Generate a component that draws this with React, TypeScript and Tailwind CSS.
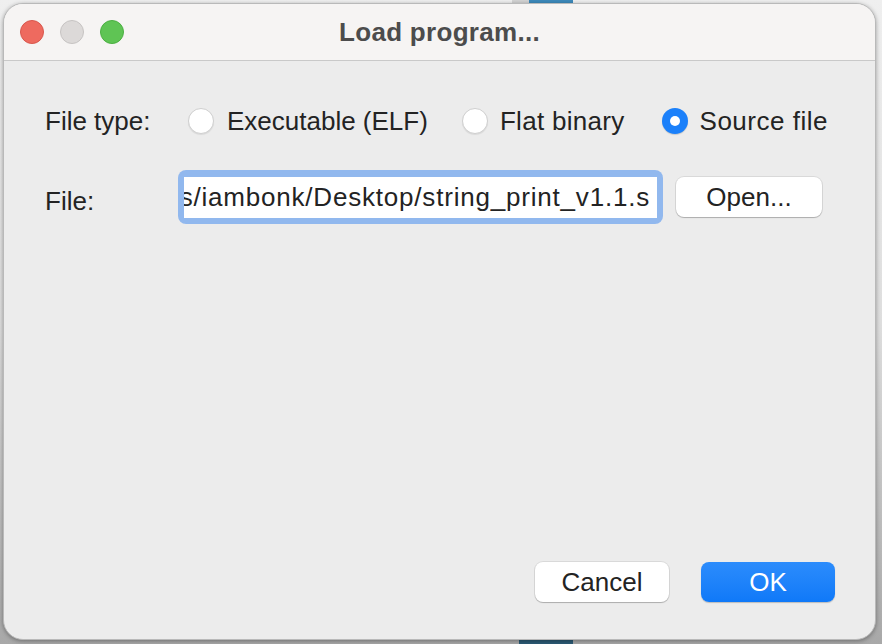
import React from "react";

function Radio({ checked }: { checked?: boolean }) {
  if (checked) {
    return (
      <div className="w-[26px] h-[26px] rounded-full bg-[#1b80fa] flex items-center justify-center shadow-[0_1px_1px_rgba(0,0,0,0.15)] shrink-0">
        <div className="w-[10px] h-[10px] rounded-full bg-white" />
      </div>
    );
  }
  return (
    <div className="w-[26px] h-[26px] rounded-full bg-white border border-[#cfcfcf] shadow-[0_1px_1px_rgba(0,0,0,0.08)] shrink-0" />
  );
}

export default function App() {
  return (
    <div className="relative w-[882px] h-[644px] overflow-hidden bg-linear-to-b from-[#efefef] via-[#dedede] to-[#a8a8a8] pl-[3px] pt-[3px] font-['Liberation_Sans',Arial,sans-serif]">
      <div className="absolute left-[512px] top-0 w-[17px] h-[3px] bg-[#d3d3d3]" />
      <div className="absolute left-[529px] top-0 w-[44px] h-[3px] bg-[#3d89ba]" />
      <div className="absolute left-[519px] bottom-0 w-[54px] h-[4px] bg-[#2b5a74]" />
      <div className="relative w-[873px] h-[637px] rounded-[20px] border border-[#b9b9b9] bg-[#ececec] shadow-[0_1px_4px_rgba(0,0,0,0.35)] overflow-hidden flex flex-col">
        <div className="relative h-[57px] shrink-0 bg-[#f6f4f3] border-b border-[#c9c9c9] flex items-center justify-center">
          <div className="absolute left-[16px] top-[16px] flex gap-[16px]">
            <div className="w-[24px] h-[24px] rounded-full bg-[#ee6a5f] border border-[#d8574d]" />
            <div className="w-[24px] h-[24px] rounded-full bg-[#dcd9d8] border border-[#c6c3c2]" />
            <div className="w-[24px] h-[24px] rounded-full bg-[#5fc454] border border-[#4caf42]" />
          </div>
          <span className="text-[26px] font-bold text-[#4c4c4c] leading-none tracking-[0.3px]">Load program...</span>
        </div>
        <div className="flex-1 flex flex-col pl-[41px] pr-[40px] pt-[40px] pb-[37px] text-[26px] text-[#232323]">
          <div className="flex items-center h-[40px]">
            <div className="w-[143px] shrink-0">File type:</div>
            <div className="flex items-center gap-[13px]">
              <Radio />
              <span>Executable (ELF)</span>
            </div>
            <div className="flex items-center gap-[12px] ml-[34px]">
              <Radio />
              <span className="tracking-[0.3px]">Flat binary</span>
            </div>
            <div className="flex items-center gap-[12px] ml-[37px]">
              <Radio checked />
              <span className="tracking-[0.5px]">Source file</span>
            </div>
          </div>
          <div className="flex items-center mt-[29px]">
            <div className="w-[133px] shrink-0 pt-[8px]">File:</div>
            <div className="w-[485px] h-[54px] rounded-[8px] bg-[#91b8ee] p-[6px] pt-[7px]">
              <div className="h-[41px] bg-white overflow-hidden flex items-center justify-end pr-[7px]">
                <span className="whitespace-nowrap tracking-[0.8px]">s/iambonk/Desktop/string_print_v1.1.s</span>
              </div>
            </div>
            <div className="ml-[13px] w-[146px] h-[40px] rounded-[8px] bg-white shadow-[0_0_0_1px_rgba(0,0,0,0.08),0_1px_1px_rgba(0,0,0,0.2)] flex items-center justify-center">
              Open...
            </div>
          </div>
          <div className="flex-1" />
          <div className="flex justify-end gap-[32px]">
            <div className="w-[134px] h-[40px] rounded-[8px] bg-white shadow-[0_0_0_1px_rgba(0,0,0,0.08),0_1px_1px_rgba(0,0,0,0.2)] flex items-center justify-center">
              Cancel
            </div>
            <div className="w-[134px] h-[40px] rounded-[8px] bg-linear-to-b from-[#2b8cfc] to-[#0f79f8] text-white shadow-[0_1px_1px_rgba(0,0,0,0.2)] flex items-center justify-center">
              OK
            </div>
          </div>
        </div>
      </div>
    </div>
  );
}
